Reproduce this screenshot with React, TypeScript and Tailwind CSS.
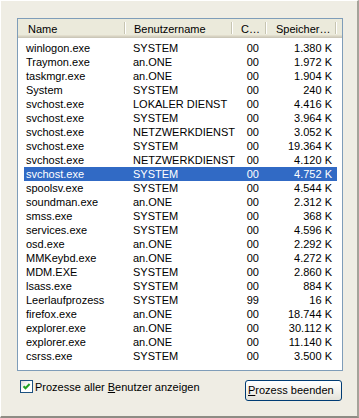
import React from 'react';

type Proc = { name: string; user: string; cpu: string; mem: string; selected?: boolean };

const procs: Proc[] = [
  { name: 'winlogon.exe', user: 'SYSTEM', cpu: '00', mem: '1.380 K' },
  { name: 'Traymon.exe', user: 'an.ONE', cpu: '00', mem: '1.972 K' },
  { name: 'taskmgr.exe', user: 'an.ONE', cpu: '00', mem: '1.904 K' },
  { name: 'System', user: 'SYSTEM', cpu: '00', mem: '240 K' },
  { name: 'svchost.exe', user: 'LOKALER DIENST', cpu: '00', mem: '4.416 K' },
  { name: 'svchost.exe', user: 'SYSTEM', cpu: '00', mem: '3.964 K' },
  { name: 'svchost.exe', user: 'NETZWERKDIENST', cpu: '00', mem: '3.052 K' },
  { name: 'svchost.exe', user: 'SYSTEM', cpu: '00', mem: '19.364 K' },
  { name: 'svchost.exe', user: 'NETZWERKDIENST', cpu: '00', mem: '4.120 K' },
  { name: 'svchost.exe', user: 'SYSTEM', cpu: '00', mem: '4.752 K', selected: true },
  { name: 'spoolsv.exe', user: 'SYSTEM', cpu: '00', mem: '4.544 K' },
  { name: 'soundman.exe', user: 'an.ONE', cpu: '00', mem: '2.312 K' },
  { name: 'smss.exe', user: 'SYSTEM', cpu: '00', mem: '368 K' },
  { name: 'services.exe', user: 'SYSTEM', cpu: '00', mem: '4.596 K' },
  { name: 'osd.exe', user: 'an.ONE', cpu: '00', mem: '2.292 K' },
  { name: 'MMKeybd.exe', user: 'an.ONE', cpu: '00', mem: '4.272 K' },
  { name: 'MDM.EXE', user: 'SYSTEM', cpu: '00', mem: '2.860 K' },
  { name: 'lsass.exe', user: 'SYSTEM', cpu: '00', mem: '884 K' },
  { name: 'Leerlaufprozess', user: 'SYSTEM', cpu: '99', mem: '16 K' },
  { name: 'firefox.exe', user: 'an.ONE', cpu: '00', mem: '18.744 K' },
  { name: 'explorer.exe', user: 'an.ONE', cpu: '00', mem: '30.112 K' },
  { name: 'explorer.exe', user: 'an.ONE', cpu: '00', mem: '11.140 K' },
  { name: 'csrss.exe', user: 'SYSTEM', cpu: '00', mem: '3.500 K' },
];

const HeaderCell: React.FC<{ label: string; width: string; pad: string }> = ({ label, width, pad }) => (
  <div className={`flex items-center h-full ${width}`}>
    <span className={`flex-1 truncate ${pad}`}>{label}</span>
    {/* column separator */}
    <div className="w-[2px] h-[12px] border-l border-[#C7C5B2] border-r border-r-white mb-[2px]" />
  </div>
);

const App: React.FC = () => {
  return (
    <div className="w-[359px] h-[418px] overflow-hidden bg-[#EFEDE4] border-l border-t border-white border-r-2 border-b-2 border-r-[#A5A39A] border-b-[#8E8C84] font-['Liberation_Sans',Arial,sans-serif] text-[11px] leading-[14px] text-black">
      <div className="flex flex-col pt-[17px] pl-[16px]">
        {/* Process list */}
        <div className="w-[326px] h-[353px] border border-[#7F9DB9] bg-white flex flex-col overflow-hidden">
          <div className="flex h-[19px] shrink-0 bg-[#EBEADB] shadow-[inset_0_-1px_0_#CBC7B8,inset_0_-2px_0_#D6D2C2,inset_0_-3px_0_#E2DECD]">
            <HeaderCell label="Name" width="w-[108px]" pad="pl-[10px]" />
            <HeaderCell label="Benutzername" width="w-[107px]" pad="pl-[8px]" />
            <HeaderCell label="C…" width="w-[34px]" pad="pl-[8px]" />
            <HeaderCell label="Speicher…" width="w-[70px]" pad="pl-[9px]" />
          </div>
          <div className="pt-[3px]">
            {procs.map((p, i) => (
              <div
                key={i}
                className={`flex h-[14px] ml-[6px] w-[313px] whitespace-nowrap ${
                  p.selected ? 'bg-[#316AC5] text-white' : ''
                }`}
              >
                <div className="w-[102px] pl-[2px]">{p.name}</div>
                <div className="w-[107px] pl-[7px]">{p.user}</div>
                <div className="w-[34px] pr-[8px] text-right">{p.cpu}</div>
                <div className="w-[70px] pr-[5px] text-right">{p.mem}</div>
              </div>
            ))}
          </div>
        </div>

        {/* Bottom controls */}
        <div className="flex items-start w-[326px] mt-[9px]">
          <div className="ml-[3px] w-[13px] h-[13px] border border-[#1C5180] bg-gradient-to-br from-[#DCDCD7] via-white to-white flex items-center justify-center">
            <svg width="9" height="9" viewBox="0 0 9 9">
              <path d="M1.5 4.2 L3.5 6.3 L7.6 2" fill="none" stroke="#21A121" strokeWidth="2" />
            </svg>
          </div>
          <span className="ml-[2px]">
            Prozesse aller <span className="underline">B</span>enutzer anzeigen
          </span>
          <button className="ml-auto mr-[1px] w-[97px] h-[21px] rounded-[3px] border border-[#003C74] bg-gradient-to-b from-white via-[#F4F3EE] to-[#E3E2DA] text-left pl-[2px] leading-[19px]">
            <span className="underline">P</span>rozess beenden
          </button>
        </div>
      </div>
    </div>
  );
};

export default App;
